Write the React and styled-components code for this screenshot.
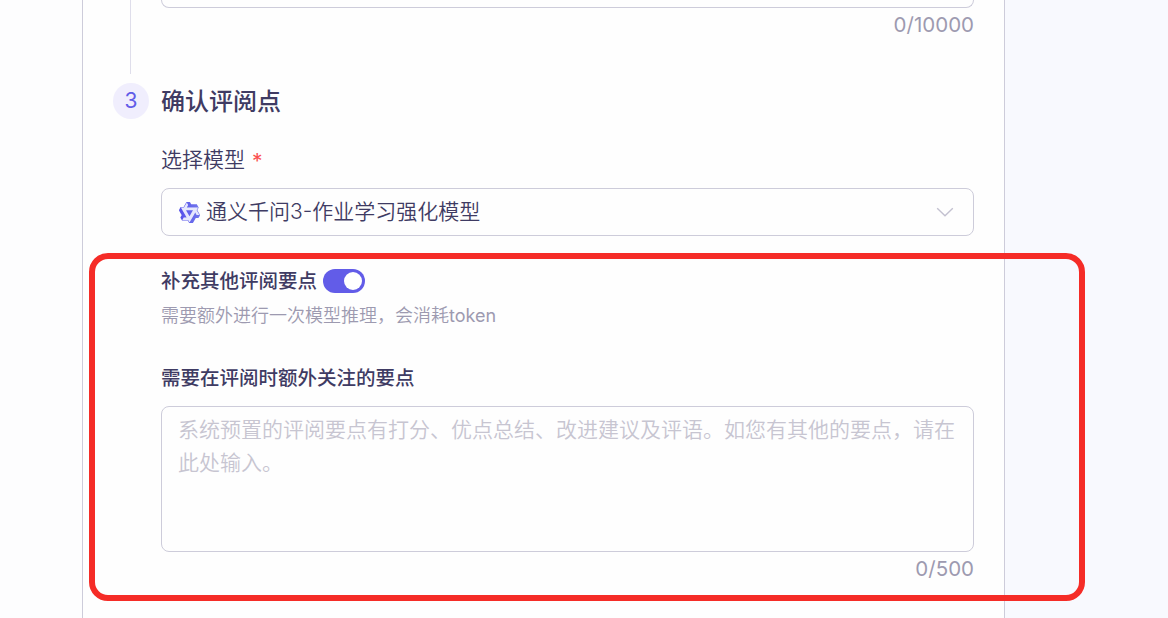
import styled, { createGlobalStyle } from 'styled-components';

const GlobalStyle = createGlobalStyle`
  * {
    box-sizing: border-box;
  }
  body {
    margin: 0;
    overflow: hidden;
    font-family: Inter, 'Noto Sans CJK SC', sans-serif;
    font-weight: 350;
    color: #3f3b63;
    background: #fdfdfe;
  }
`;

export default function App() {
  return (
    <>
      <GlobalStyle />
      <StyledPage>
        <StyledPanel>
          <StyledPreviousStep>
            <StyledStepLine />
            <StyledContent>
              <StyledPreviousInput />
              <StyledCounter>0/10000</StyledCounter>
            </StyledContent>
          </StyledPreviousStep>
          <StyledStepHeader>
            <StyledStepNumber>3</StyledStepNumber>
            <StyledTitle>确认评阅点</StyledTitle>
          </StyledStepHeader>
          <StyledForm>
            <StyledLabel>
              选择模型<StyledRequired>*</StyledRequired>
            </StyledLabel>
            <StyledSelect>
              <QwenLogo />
              <StyledSelectValue>通义千问3-作业学习强化模型</StyledSelectValue>
              <ChevronIcon />
            </StyledSelect>
            <StyledSwitchRow>
              <StyledSubtitle>补充其他评阅要点</StyledSubtitle>
              <StyledSwitch>
                <StyledKnob />
              </StyledSwitch>
            </StyledSwitchRow>
            <StyledHint>
              需要额外进行一次模型推理，会消耗<StyledLatin>token</StyledLatin>
            </StyledHint>
            <StyledFieldTitle>需要在评阅时额外关注的要点</StyledFieldTitle>
            <StyledTextarea placeholder="系统预置的评阅要点有打分、优点总结、改进建议及评语。如您有其他的要点，请在此处输入。" />
            <StyledCounter>0/500</StyledCounter>
          </StyledForm>
        </StyledPanel>
        <StyledAside />
        <StyledHighlight />
      </StyledPage>
    </>
  );
}

const QwenLogo = () => (
  <StyledLogo viewBox="0 0 24 24">
    <defs>
      <linearGradient id="logoFill" x1="0" y1="0" x2="1" y2="0">
        <stop offset="0" stopColor="#5550ea" />
        <stop offset="1" stopColor="#7278ec" />
      </linearGradient>
    </defs>
    <path
      fill="#e6e8fd"
      d="M9.2 1.7 6.2 6.8H3.2l5.9 10.3H6.1l-1.5 2.6h5.9l1.5 2.5 5.8-10.2 1.5 2.6h2.9l-3-5.3 1.5-2.5H9.1l1.5-2.6z"
    />
    <path
      fill="url(#logoFill)"
      d="M12.604 1.34c.393.69.784 1.382 1.174 2.075a.18.18 0 00.157.091h5.552c.174 0 .322.11.446.327l1.454 2.57c.19.337.24.478.024.837-.26.43-.513.864-.76 1.3l-.367.658c-.106.196-.223.28-.04.512l2.652 4.637c.172.301.111.494-.043.77-.437.785-.882 1.564-1.335 2.34-.159.272-.352.375-.68.37-.777-.016-1.552-.01-2.327.016a.099.099 0 00-.081.05 575.097 575.097 0 01-2.705 4.74c-.169.293-.38.363-.725.364-.997.003-2.002.004-3.017.002a.537.537 0 01-.465-.271l-1.335-2.323a.09.09 0 00-.083-.049H4.982c-.285.03-.553-.001-.805-.092l-1.603-2.77a.543.543 0 01-.002-.54l1.207-2.12a.198.198 0 000-.197 550.951 550.951 0 01-1.875-3.272l-.79-1.395c-.16-.31-.173-.496.095-.965.465-.813.927-1.625 1.387-2.436.132-.234.304-.334.584-.335a338.3 338.3 0 012.589-.001.124.124 0 00.107-.063l2.806-4.895a.488.488 0 01.422-.246c.524-.001 1.053 0 1.583-.006L11.704 1c.341-.003.724.032.9.34zm-3.432.403a.06.06 0 00-.052.03L6.254 6.788a.157.157 0 01-.135.078H3.253c-.056 0-.07.025-.041.074l5.81 10.156c.025.042.013.062-.034.063l-2.795.015a.218.218 0 00-.2.116l-1.32 2.31c-.044.078-.021.118.068.118l5.716.008c.046 0 .08.02.104.061l1.403 2.454c.046.081.092.082.139 0l5.006-8.76.783-1.382a.055.055 0 01.096 0l1.424 2.53a.122.122 0 00.107.062l2.763-.02a.04.04 0 00.035-.02.041.041 0 000-.04l-2.9-5.086a.108.108 0 010-.113l.293-.507 1.12-1.977c.024-.041.012-.062-.035-.062H9.2c-.059 0-.073-.026-.043-.077l1.434-2.505a.107.107 0 000-.114L9.225 1.774a.06.06 0 00-.053-.031zm6.29 8.02c.046 0 .058.02.034.06l-.832 1.465-2.613 4.585a.056.056 0 01-.05.029.058.058 0 01-.05-.029L8.498 9.841c-.02-.034-.01-.052.028-.054l.216-.012 6.722-.012z"
    />
  </StyledLogo>
);

const ChevronIcon = () => (
  <StyledChevron viewBox="0 0 18 10">
    <path d="M1.2 1.2 9 8.7l7.8-7.5" />
  </StyledChevron>
);

const StyledPage = styled.div`
  position: relative;
  display: flex;
  height: 618px;
  padding-left: 82px;
  overflow: hidden;
`;
const StyledPanel = styled.main`
  width: 923px;
  padding: 0 30px;
  border-left: 1px solid #cdccda;
  border-right: 1px solid #cdccda;
  background: #fefefe;
`;
const StyledAside = styled.aside`
  flex: 1;
  background: #f8f9fe;
`;
const StyledPreviousStep = styled.div`
  display: flex;
  height: 83px;
`;
const StyledStepLine = styled.div`
  width: 1px;
  height: 74px;
  margin: 0 30px 0 17px;
  background: #dfdeeb;
`;
const StyledContent = styled.div`
  flex: 1;
`;
const StyledPreviousInput = styled.div`
  height: 8px;
  border: 1px solid #cdccda;
  border-top: none;
  border-radius: 0 0 8px 8px;
`;
const StyledCounter = styled.div`
  height: 34px;
  font-size: 20.5px;
  font-weight: 400;
  line-height: 34px;
  text-align: right;
  color: #9d9ab0;
`;
const StyledStepHeader = styled.div`
  display: flex;
  align-items: center;
  gap: 12px;
  height: 36px;
`;
const StyledStepNumber = styled.div`
  width: 36px;
  height: 36px;
  border-radius: 50%;
  font-size: 21px;
  font-weight: 400;
  line-height: 35px;
  text-align: center;
  color: #625ce8;
  background: #f0eefd;
`;
const StyledTitle = styled.h2`
  margin: 0;
  padding-top: 2px;
  font-size: 24px;
  font-weight: 500;
  line-height: 36px;
`;
const StyledForm = styled.div`
  padding-left: 48px;
`;
const StyledLabel = styled.div`
  height: 69px;
  padding-top: 24px;
  font-size: 21px;
  line-height: 34px;
`;
const StyledRequired = styled.span`
  position: relative;
  top: 2px;
  margin-left: 7px;
  font-weight: 400;
  color: #fa5151;
`;
const StyledSelect = styled.div`
  display: flex;
  align-items: center;
  height: 48px;
  padding: 0 19px 0 16px;
  border: 1px solid #cdccda;
  border-radius: 8px;
`;
const StyledLogo = styled.svg`
  width: 23px;
  height: 23px;
  margin-right: 5px;
`;
const StyledSelectValue = styled.span`
  flex: 1;
  font-size: 21px;
  line-height: 34px;
`;
const StyledChevron = styled.svg`
  width: 18px;
  height: 10px;
  fill: none;
  stroke: #c3c1d0;
  stroke-width: 1.4;
`;
const StyledSwitchRow = styled.div`
  display: flex;
  align-items: center;
  gap: 6px;
  height: 30px;
  margin-top: 30px;
`;
const StyledSubtitle = styled.span`
  font-size: 19.5px;
  font-weight: 500;
  line-height: 30px;
`;
const StyledSwitch = styled.div`
  display: flex;
  justify-content: flex-end;
  width: 42px;
  height: 24px;
  padding: 3px;
  border-radius: 12px;
  background: #625ce8;
`;
const StyledKnob = styled.div`
  width: 18px;
  height: 18px;
  border-radius: 50%;
  background: #fff;
`;
const StyledHint = styled.div`
  height: 30px;
  margin-top: 5px;
  font-size: 18px;
  line-height: 30px;
  color: #9d9ab0;
`;
const StyledLatin = styled.span`
  font-weight: 400;
`;
const StyledFieldTitle = styled.div`
  height: 30px;
  margin: 32px 0 13px;
  font-size: 19.5px;
  font-weight: 500;
  line-height: 30px;
`;
const StyledTextarea = styled.textarea`
  display: block;
  width: 100%;
  height: 146px;
  padding: 6px 16px;
  border: 1px solid #cdccda;
  border-radius: 8px;
  font-family: inherit;
  font-size: 21px;
  font-weight: 350;
  line-height: 33px;
  background: transparent;
  resize: none;
  outline: none;
  &::placeholder {
    color: #c7c5d1;
    opacity: 1;
  }
`;
const StyledHighlight = styled.div`
  position: absolute;
  top: 253px;
  left: 89px;
  width: 996px;
  height: 348px;
  border: 6px solid #f52c27;
  border-radius: 19px;
  pointer-events: none;
`;
